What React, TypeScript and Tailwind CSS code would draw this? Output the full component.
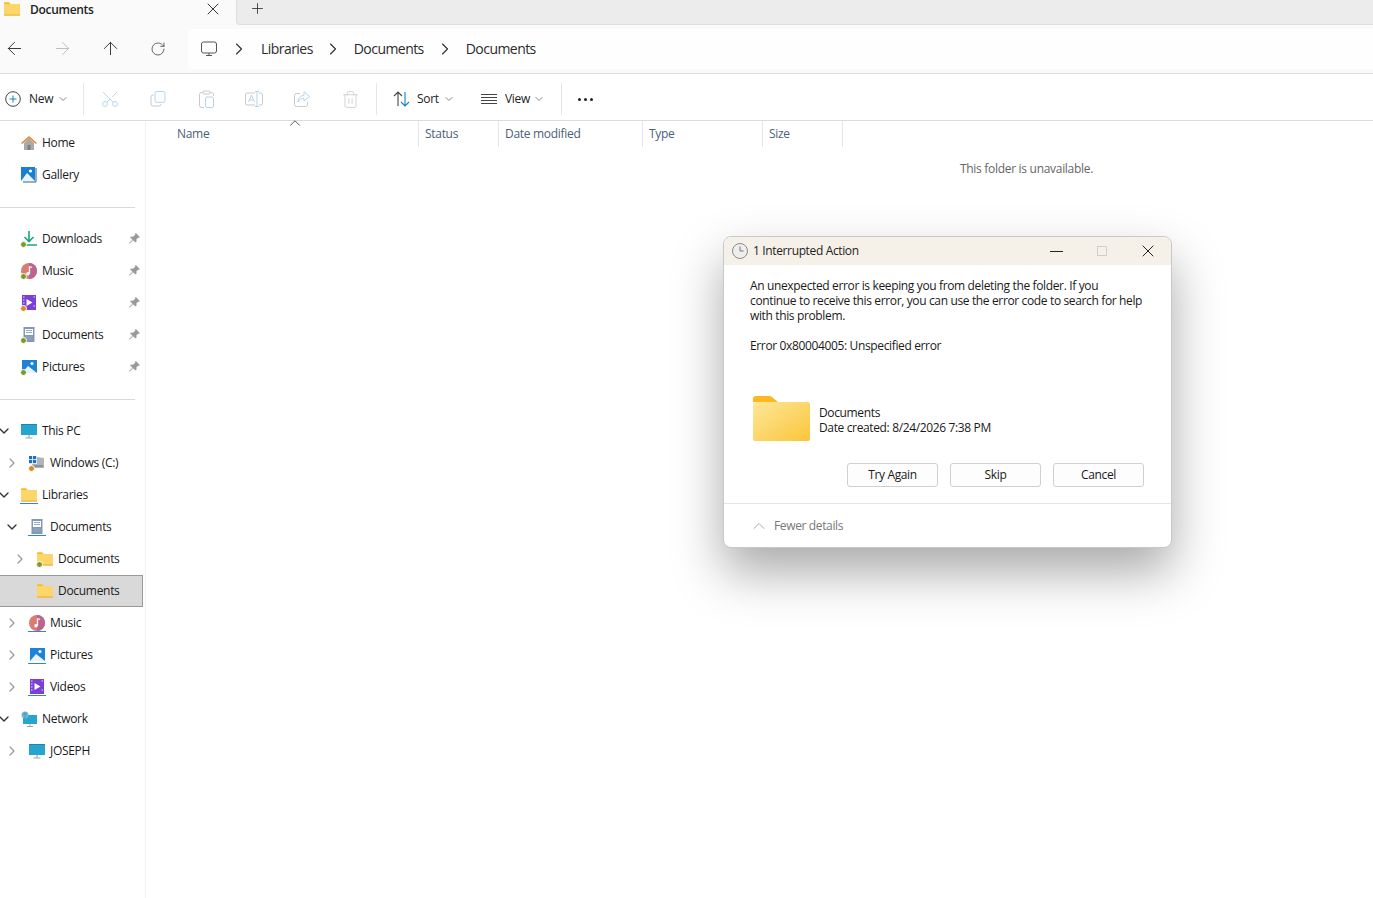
import { FC, ReactNode } from "react";
import {
  ArrowLeft,
  ArrowRight,
  ArrowUp,
  ChevronDown,
  ChevronRight,
  ChevronUp,
  Plus,
  RotateCw,
  Scissors,
  Trash2,
  X,
} from "lucide-react";

const Dot: FC<{ color?: string }> = ({ color }) =>
  color ? (
    <span
      className="absolute -left-px -bottom-px w-[7px] h-[7px] rounded-full border border-white"
      style={{ background: color }}
    />
  ) : null;

const FolderIcon: FC<{ className?: string }> = ({ className }) => (
  <svg viewBox="0 0 16 14" className={className}>
    <path d="M0 1.500C0 .8.5.3 1.200.3h3.400c.4 0 .7.2 1 .5L6.600 2H0z" fill="#fbb91f" />
    <rect x="0" y="2" width="16" height="11.500" rx=".7" fill="#fcd56b" />
    <rect x="0" y="12.600" width="16" height=".9" fill="#e9a91e" />
  </svg>
);

const HomeIcon = () => (
  <svg viewBox="0 0 16 16" className="w-4 h-4">
    <path d="M3 8v7h10V8L8 3z" fill="#a9a9a9" />
    <rect x="6.500" y="10" width="3" height="5" fill="#7e7e7e" />
    <path d="M0 8l8-7 8 7-1.200 1L8 3.200 1.200 9z" fill="#e8893a" />
  </svg>
);

const GalleryIcon = () => (
  <svg viewBox="0 0 16 16" className="w-4 h-4">
    <rect x="0" y="0" width="14" height="14" fill="#1b7fd1" />
    <path d="M0 14l6-8 8 8z" fill="#e8f3fb" />
    <circle cx="9.500" cy="4" r="1.600" fill="#fff" />
    <path d="M15 1v14H2" stroke="#2a5f8f" fill="none" />
  </svg>
);

const DownloadIcon = () => (
  <svg viewBox="0 0 16 16" className="w-4 h-4" fill="none" stroke="#1fa37e" strokeWidth="1.600">
    <path d="M8 0v10M3.500 6l4.500 4.500L12.500 6M2 14h14" />
  </svg>
);

const MusicIcon = () => (
  <svg viewBox="0 0 16 16" className="w-4 h-4">
    <circle cx="8" cy="8" r="8" fill="#d97c72" />
    <path d="M16 8a8 8 0 0 1-8 8V0a8 8 0 0 1 8 8z" fill="#bd6390" />
    <path d="M8.500 3.500v7" stroke="#fff" strokeWidth="1.300" />
    <path d="M8.500 3.500l2.500 1" stroke="#fff" strokeWidth="1.300" />
    <circle cx="7" cy="10.800" r="1.700" fill="#fff" />
  </svg>
);

const VideoIcon = () => (
  <svg viewBox="0 0 16 16" className="w-4 h-4">
    <rect x="1" y="0" width="14" height="15" fill="#7a3fd6" />
    <path d="M5.500 4l6 3.500-6 3.500z" fill="#fff" />
    <path d="M2 2h1.500M2 5h1.500M2 8h1.500M2 11h1.500M12.500 2H14M12.500 11H14" stroke="#e7dcfa" />
  </svg>
);

const DocsIcon = () => (
  <svg viewBox="0 0 16 16" className="w-4 h-4">
    <rect x="2.500" y="0" width="11" height="15" fill="#8398b4" />
    <rect x="4" y="2" width="8" height="6" fill="#fff" />
    <path d="M5 3.500h6M5 5.500h6M4.500 10h7M4.500 12h7" stroke="#9aaac0" />
  </svg>
);

const PicturesIcon = () => (
  <svg viewBox="0 0 16 16" className="w-4 h-4">
    <rect x="1" y="1" width="15" height="13" fill="#1e82d6" />
    <path d="M1 14l6-7 9 7z" fill="#e8f3fb" />
    <circle cx="11" cy="4.500" r="1.500" fill="#fff" />
  </svg>
);

const MonitorIcon = () => (
  <svg viewBox="0 0 16 16" className="w-4 h-4">
    <rect x="0" y="1" width="16" height="11" rx=".5" fill="#26a6cf" />
    <rect x="0" y="1" width="16" height="1" fill="#1e86ac" />
    <path d="M8 12v2.500M4.500 15h7" stroke="#9aa7ad" strokeWidth="1.200" />
  </svg>
);

const DriveIcon = () => (
  <svg viewBox="0 0 16 16" className="w-4 h-4">
    <rect x="0" y="1" width="3.200" height="3.200" fill="#1d70c7" />
    <rect x="4" y="1" width="3.200" height="3.200" fill="#1d70c7" />
    <rect x="0" y="5" width="3.200" height="3.200" fill="#1d70c7" />
    <rect x="4" y="5" width="3.200" height="3.200" fill="#1d70c7" />
    <path d="M8 2l7 1v10H3V9h5z" fill="#aeb4b8" />
    <path d="M4 11h10" stroke="#6a7175" />
  </svg>
);

const NetworkIcon = () => (
  <svg viewBox="0 0 16 16" className="w-4 h-4">
    <rect x="2" y="4" width="14" height="9" fill="#26a6cf" />
    <path d="M9 13v2M6 15.500h6" stroke="#9aa7ad" />
    <circle cx="4" cy="4" r="3.500" fill="#6fb7d9" />
    <path d="M2 3h4M4 1v6" stroke="#3f8db3" strokeWidth=".7" />
  </svg>
);

const PinIcon = () => (
  <svg viewBox="0 0 12 12" className="w-[11px] h-[11px]">
    <path d="M7.500 0L12 4.500l-1 .8-.8-.3L8 7.200l.3 2.200-1 1L4.200 7.800.8 11.500 0 11l3.700-3.700L1.200 4.700l1-1 2.200.3L6.800 1.800l-.2-.9z" fill="#999" />
  </svg>
);

type NavItem = {
  label: string;
  icon: ReactNode;
  level: number;
  chevron?: "open" | "closed";
  dot?: string;
  pin?: boolean;
  selected?: boolean;
  lib?: boolean;
};

const quick: NavItem[] = [
  { label: "Downloads", icon: <DownloadIcon />, level: 0, dot: "#7d9a2b", pin: true },
  { label: "Music", icon: <MusicIcon />, level: 0, dot: "#7d9a2b", pin: true },
  { label: "Videos", icon: <VideoIcon />, level: 0, dot: "#d98a2b", pin: true },
  { label: "Documents", icon: <DocsIcon />, level: 0, dot: "#7d9a2b", pin: true },
  { label: "Pictures", icon: <PicturesIcon />, level: 0, dot: "#7d9a2b", pin: true },
];

const tree: NavItem[] = [
  { label: "This PC", icon: <MonitorIcon />, level: 0, chevron: "open" },
  { label: "Windows (C:)", icon: <DriveIcon />, level: 1, chevron: "closed", dot: "#d98a2b" },
  { label: "Libraries", icon: <FolderIcon className="w-4 h-4" />, level: 0, chevron: "open", lib: true },
  { label: "Documents", icon: <DocsIcon />, level: 1, chevron: "open", lib: true },
  { label: "Documents", icon: <FolderIcon className="w-4 h-4" />, level: 2, chevron: "closed", dot: "#7d9a2b" },
  { label: "Documents", icon: <FolderIcon className="w-4 h-4" />, level: 2, selected: true },
  { label: "Music", icon: <MusicIcon />, level: 1, chevron: "closed", lib: true },
  { label: "Pictures", icon: <PicturesIcon />, level: 1, chevron: "closed", lib: true },
  { label: "Videos", icon: <VideoIcon />, level: 1, chevron: "closed", lib: true },
  { label: "Network", icon: <NetworkIcon />, level: 0, chevron: "open" },
  { label: "JOSEPH", icon: <MonitorIcon />, level: 1, chevron: "closed" },
];

const NavRow: FC<{ item: NavItem }> = ({ item }) => (
  <div
    className={`h-8 flex items-center relative w-[143px] ${
      item.selected ? "bg-[#d9d9d9] border border-l-0 border-[#999999]" : ""
    }`}
  >
    <div
      className={
        item.level === 0 ? "w-[21px] shrink-0 pl-0" : item.level === 1 ? "w-[29px] shrink-0 pl-2" : "w-[37px] shrink-0 pl-4"
      }
    >
      {item.chevron === "open" && <ChevronDown size={16} strokeWidth={2} className="text-[#333] -ml-1" />}
      {item.chevron === "closed" && <ChevronRight size={16} strokeWidth={1.800} className="text-[#999] -ml-1" />}
    </div>
    <div className="relative w-4 h-4 shrink-0">
      {item.icon}
      {item.lib && <span className="absolute -left-px -right-px -bottom-px h-px bg-[#2b8ac6]" />}
      <Dot color={item.dot} />
    </div>
    <span className="ml-[5px] text-[12px] text-[#1a1a1a] whitespace-nowrap">{item.label}</span>
    {item.pin && (
      <span className="absolute left-[129px] top-[10px]">
        <PinIcon />
      </span>
    )}
  </div>
);

const AddressBtn: FC<{ children: ReactNode }> = ({ children }) => (
  <div className="w-12 flex items-center justify-center">{children}</div>
);

const ToolBtn: FC<{ children: ReactNode }> = ({ children }) => (
  <div className="w-12 h-full flex items-center justify-center text-[#b7d3e8]">{children}</div>
);

const Sep = () => <div className="w-px h-8 bg-[#e6e6e6] shrink-0" />;

const Column: FC<{ label: string; width: string; pad: string }> = ({ label, width, pad }) => (
  <div className={`${width} ${pad} h-[26px] border-r border-[#e5e5e5] flex items-center text-[12px] text-[#4c607a]`}>
    {label}
  </div>
);

const DialogButton: FC<{ label: string }> = ({ label }) => (
  <button className="w-[91px] h-6 pb-[2px] rounded-[3px] border border-[#d0d0d0] bg-[#fdfdfd] text-[12px] text-[#1a1a1a]">
    {label}
  </button>
);

export default function App() {
  return (
    <div
      className="w-[1373px] h-[898px] overflow-hidden bg-white flex flex-col relative tracking-[-0.3px]"
      style={{ fontFamily: '"Open Sans", "Liberation Sans", sans-serif' }}
    >
      {/* tab strip */}
      <div className="h-[25px] flex shrink-0 bg-[#fafafa]">
        <div className="w-[236px] flex items-center relative overflow-hidden">
          <FolderIcon className="w-4 h-[14px] ml-1 -mt-[8px]" />
          <span className="ml-[10px] text-[12px] font-semibold text-[#222] -mt-[6px]">Documents</span>
          <X size={20} strokeWidth={1.200} className="absolute left-[203px] -top-px text-[#333]" />
        </div>
        <div className="flex-1 bg-[#ececec] rounded-bl-[4px] border-l border-b border-[#dedede] flex items-start">
          <Plus size={17} strokeWidth={1.200} className="ml-3 text-[#333]" />
        </div>
      </div>

      {/* address row */}
      <div className="h-[49px] flex items-center shrink-0 bg-[#fafafa] border-b border-[#dcdcdc] pb-[1px]">
        <div className="flex h-full items-center -ml-[10px]">
          <AddressBtn><ArrowLeft size={21} strokeWidth={1.100} className="text-[#333]" /></AddressBtn>
          <AddressBtn><ArrowRight size={21} strokeWidth={1.100} className="text-[#bbb]" /></AddressBtn>
          <AddressBtn><ArrowUp size={21} strokeWidth={1.100} className="text-[#333]" /></AddressBtn>
          <AddressBtn><RotateCw size={16} strokeWidth={1.200} className="text-[#444]" /></AddressBtn>
        </div>
        <div className="ml-[6px] flex-1 h-[40px] bg-[#fefefe] rounded-l-[4px] flex items-center pl-[13px] tracking-[-0.55px]">
          <svg viewBox="0 0 16 16" className="w-4 h-4 mr-[12px]" fill="none" stroke="#555" strokeWidth="1">
            <rect x=".5" y="1" width="15" height="11" rx="2" />
            <path d="M8 12v2.500M5 14.500h6" />
          </svg>
          <ChevronRight size={20} strokeWidth={1.400} className="text-[#333] mr-[12px]" />
          <span className="text-[14px] text-[#2b2b2b]">Libraries</span>
          <ChevronRight size={20} strokeWidth={1.400} className="text-[#333] ml-[10px] mr-[11px]" />
          <span className="text-[14px] text-[#2b2b2b]">Documents</span>
          <ChevronRight size={20} strokeWidth={1.400} className="text-[#333] ml-[11px] mr-[11px]" />
          <span className="text-[14px] text-[#2b2b2b]">Documents</span>
        </div>
      </div>

      {/* command bar */}
      <div className="h-[47px] flex items-center shrink-0 border-b border-[#dcdcdc] pt-[4px]">
        <div className="w-[83px] flex items-center shrink-0">
          <svg viewBox="0 0 16 16" className="w-4 h-4 ml-[5px] -mt-px" fill="none">
            <circle cx="8" cy="8" r="7.300" stroke="#444" />
            <path d="M8 4.500v7M4.500 8h7" stroke="#1480c8" />
          </svg>
          <span className="ml-2 text-[12px] text-[#222]">New</span>
          <ChevronDown size={12} className="ml-[4px] text-[#888]" />
        </div>
        <Sep />
        <div className="w-[2px]" />
        <ToolBtn><Scissors size={20} strokeWidth={1.100} className="-rotate-90" /></ToolBtn>
        <ToolBtn>
          <svg viewBox="0 0 16 16" className="w-4 h-4" fill="none" strokeWidth="1">
            <rect x="5" y=".5" width="10" height="11" rx="2" stroke="currentColor" />
            <path d="M3.500 4H3a2 2 0 0 0-2 2v7a2 2 0 0 0 2 2h6a2 2 0 0 0 2-2" stroke="#c9c9c9" />
          </svg>
        </ToolBtn>
        <ToolBtn>
          <svg viewBox="0 0 15 18" className="w-[15px] h-[18px]" fill="none" strokeWidth="1">
            <path d="M4 2.500H2.500a2 2 0 0 0-2 2v11a2 2 0 0 0 2 2H5M11 2.500h1.500a2 2 0 0 1 2 2v1.500" stroke="#c9c9c9" />
            <rect x="4" y="1" width="7" height="3" rx="1" stroke="#c9c9c9" />
            <rect x="6.500" y="7" width="8" height="10.500" rx="1.500" stroke="currentColor" />
          </svg>
        </ToolBtn>
        <ToolBtn>
          <svg viewBox="0 0 18 16" className="w-[18px] h-4" fill="none" strokeWidth="1">
            <path d="M10 2H2a1.500 1.500 0 0 0-1.500 1.500v9A1.500 1.500 0 0 0 2 14h8M14 2h2a1.500 1.500 0 0 1 1.500 1.500v9A1.500 1.500 0 0 1 16 14h-2" stroke="#c9c9c9" />
            <path d="M12 .5v15M10 .5h4M10 15.500h4M3.500 11l3-7 3 7M4.500 9h4" stroke="currentColor" />
          </svg>
        </ToolBtn>
        <ToolBtn>
          <svg viewBox="0 0 16 16" className="w-4 h-4" fill="none" strokeWidth="1">
            <path d="M6 2.500H2.500a2 2 0 0 0-2 2v9a2 2 0 0 0 2 2h9a2 2 0 0 0 2-2V11" stroke="#c9c9c9" />
            <path d="M10 .8L15.500 5.500 10 10V7.500c-3 0-5 1-6 3.500 0-4 2.500-6.500 6-6.500z" stroke="currentColor" />
          </svg>
        </ToolBtn>
        <ToolBtn><Trash2 size={19} strokeWidth={1} className="text-[#c9c9c9]" /></ToolBtn>
        <div className="w-[2px]" />
        <Sep />
        <div className="w-[104px] flex items-center shrink-0 pl-4">
          <svg viewBox="0 0 18 16" className="w-[18px] h-4" fill="none" strokeWidth="1.100">
            <path d="M5 15V1M1 5l4-4 4 4" stroke="#444" />
            <path d="M12 1v14M8 11l4 4 4-4" stroke="#1480c8" />
          </svg>
          <span className="ml-[6px] text-[12px] text-[#222]">Sort</span>
          <ChevronDown size={12} className="ml-[4px] text-[#888]" />
        </div>
        <div className="w-[80px] flex items-center shrink-0">
          <svg viewBox="0 0 16 12" className="w-4 h-3" fill="none" stroke="#444" strokeWidth="1">
            <path d="M0 1.500h16M0 4.500h16M0 7.500h16M0 10.500h16" />
          </svg>
          <span className="ml-2 text-[12px] text-[#222]">View</span>
          <ChevronDown size={12} className="ml-[3px] text-[#888]" />
        </div>
        <Sep />
        <div className="ml-4 flex gap-[3px]">
          <span className="w-[3px] h-[3px] rounded-full bg-[#222]" />
          <span className="w-[3px] h-[3px] rounded-full bg-[#222]" />
          <span className="w-[3px] h-[3px] rounded-full bg-[#222]" />
        </div>
      </div>

      {/* body */}
      <div className="flex-1 flex min-h-0">
        <div className="w-[146px] shrink-0 border-r border-[#f2f2f2] pt-[6px]">
          <NavRow item={{ label: "Home", icon: <HomeIcon />, level: 0 }} />
          <NavRow item={{ label: "Gallery", icon: <GalleryIcon />, level: 0 }} />
          <div className="h-8 flex items-center"><div className="w-[135px] h-px bg-[#d9d9d9]" /></div>
          {quick.map((item) => (
            <NavRow key={item.label} item={item} />
          ))}
          <div className="h-8 flex items-center"><div className="w-[135px] h-px bg-[#d9d9d9]" /></div>
          {tree.map((item, i) => (
            <NavRow key={i} item={item} />
          ))}
        </div>

        <div className="flex-1 relative">
          <div className="flex relative">
            <Column label="Name" width="w-[273px]" pad="pl-[31px]" />
            <Column label="Status" width="w-[80px]" pad="pl-[6px]" />
            <Column label="Date modified" width="w-[144px]" pad="pl-[6px]" />
            <Column label="Type" width="w-[120px]" pad="pl-[6px]" />
            <Column label="Size" width="w-[80px]" pad="pl-[6px]" />
            <ChevronUp size={18} strokeWidth={1.300} className="absolute left-[140px] -top-[7px] text-[#555]" />
          </div>
          <div className="text-[12px] text-[#666] ml-[814px] mt-[13px] whitespace-nowrap">This folder is unavailable.</div>

          {/* dialog window */}
          <div className="absolute left-[577px] top-[115px] w-[449px] h-[312px] rounded-[8px] bg-white border border-[#c8c8c8] shadow-[0_24px_50px_rgba(0,0,0,0.34)] overflow-hidden flex flex-col tracking-[-0.36px]">
            <div className="h-[28px] bg-[#f5f1e8] flex items-center shrink-0 relative">
              <svg viewBox="0 0 16 16" className="w-4 h-4 ml-2" fill="none">
                <circle cx="8" cy="8" r="7.500" fill="#eeeeee" stroke="#8a8a8a" />
                <path d="M8 3.500V8h3.500" stroke="#777" />
              </svg>
              <span className="ml-[5px] text-[12px] text-[#222]">1 Interrupted Action</span>
              <div className="ml-auto flex items-center">
                <div className="w-[13px] h-px bg-[#222] mr-[34px]" />
                <div className="w-[10px] h-[10px] border border-[#cfcfcf] mr-[31px]" />
                <X size={20} strokeWidth={1.200} className="text-[#222] mr-[13px]" />
              </div>
            </div>
            <div className="pl-[26px] pr-[26px] pt-[13px] text-[12px] leading-[15px] text-[#1a1a1a] flex-1 flex flex-col">
              <p className="m-0 w-[393px]">
                An unexpected error is keeping you from deleting the folder. If you continue to receive this error, you can use the error code to search for help with this problem.
              </p>
              <p className="mt-[15px]">Error 0x80004005: Unspecified error</p>
              <div className="flex items-center mt-[43px] ml-[3px]">
                <svg viewBox="0 0 57 45" className="w-[57px] h-[45px]">
                  <path d="M0 3a3 3 0 0 1 3-3h13c1.500 0 2.500.5 3.500 1.500L25 6H0z" fill="#fbb91f" />
                  <defs>
                    <linearGradient id="folderFill" x1="0" y1="0" x2="1" y2="1">
                      <stop offset="0" stopColor="#fde79a" />
                      <stop offset="1" stopColor="#fbc53a" />
                    </linearGradient>
                  </defs>
                  <rect x="0" y="6" width="57" height="39" rx="2" fill="url(#folderFill)" />
                </svg>
                <div className="ml-[9px] mt-[2px]">
                  <div>Documents</div>
                  <div>Date created: 8/24/2026 7:38 PM</div>
                </div>
              </div>
              <div className="flex justify-end gap-3 mt-[22px] pr-[1px]">
                <DialogButton label="Try Again" />
                <DialogButton label="Skip" />
                <DialogButton label="Cancel" />
              </div>
            </div>
            <div className="h-[44px] border-t border-[#e5e5e5] flex items-center shrink-0 pl-[25px]">
              <ChevronUp size={20} strokeWidth={1} className="text-[#999]" />
              <span className="ml-[5px] text-[12px] text-[#777]">Fewer details</span>
            </div>
          </div>
        </div>
      </div>
    </div>
  );
}
